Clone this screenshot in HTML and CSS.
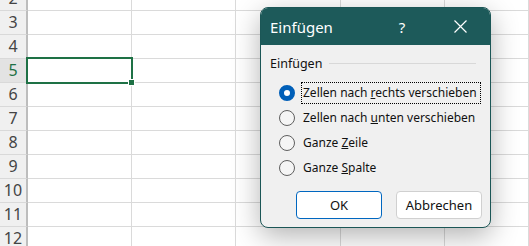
FILE: index.html
```html
<!DOCTYPE html>
<html lang="de">
  <head>
    <meta charset="UTF-8" />
    <title>Einfügen</title>
    <link rel="stylesheet" href="styles.css">
  </head>
  <body>
    <div class="sheet">
      <div class="row"><div class="head">2</div><div class="cell"></div><div class="cell"></div><div class="cell wide"></div><div class="cell"></div><div class="cell last"></div></div>
      <div class="row"><div class="head">3</div><div class="cell"></div><div class="cell"></div><div class="cell wide"></div><div class="cell"></div><div class="cell last"></div></div>
      <div class="row"><div class="head">4</div><div class="cell"></div><div class="cell"></div><div class="cell wide"></div><div class="cell"></div><div class="cell last"></div></div>
      <div class="row"><div class="head active">5</div><div class="cell selected"></div><div class="cell"></div><div class="cell wide"></div><div class="cell"></div><div class="cell last"></div></div>
      <div class="row"><div class="head">6</div><div class="cell"></div><div class="cell"></div><div class="cell wide"></div><div class="cell"></div><div class="cell last"></div></div>
      <div class="row"><div class="head">7</div><div class="cell"></div><div class="cell"></div><div class="cell wide"></div><div class="cell"></div><div class="cell last"></div></div>
      <div class="row"><div class="head">8</div><div class="cell"></div><div class="cell"></div><div class="cell wide"></div><div class="cell"></div><div class="cell last"></div></div>
      <div class="row"><div class="head">9</div><div class="cell"></div><div class="cell"></div><div class="cell wide"></div><div class="cell"></div><div class="cell last"></div></div>
      <div class="row"><div class="head">10</div><div class="cell"></div><div class="cell"></div><div class="cell wide"></div><div class="cell"></div><div class="cell last"></div></div>
      <div class="row"><div class="head">11</div><div class="cell"></div><div class="cell"></div><div class="cell wide"></div><div class="cell"></div><div class="cell last"></div></div>
      <div class="row"><div class="head">12</div><div class="cell"></div><div class="cell"></div><div class="cell wide"></div><div class="cell"></div><div class="cell last"></div></div>
    </div>

    <!-- Insert cells dialog -->
    <div class="dialog">
      <div class="titlebar">
        <span class="title">Einfügen</span>
        <span class="help">?</span>
        <span class="close">
          <svg width="13" height="13" viewBox="0 0 13 13">
            <path d="M0.5 0.5 L12.5 12.5 M12.5 0.5 L0.5 12.5" stroke="#fff" stroke-width="1.2" fill="none" />
          </svg>
        </span>
      </div>
      <div class="dialog-body">
        <div class="legend">
          <span>Einfügen</span>
          <span class="legend-line"></span>
        </div>
        <div class="options">
          <div class="option"><span class="radio checked"></span><span class="label focused">Zellen nach <u>r</u>echts verschieben</span></div>
          <div class="option"><span class="radio"></span><span class="label">Zellen nach <u>u</u>nten verschieben</span></div>
          <div class="option"><span class="radio"></span><span class="label">Ganze <u>Z</u>eile</span></div>
          <div class="option"><span class="radio"></span><span class="label">Ganze <u>S</u>palte</span></div>
        </div>
        <div class="buttons">
          <button class="btn primary">OK</button>
          <button class="btn">Abbrechen</button>
        </div>
      </div>
    </div>
  </body>
</html>
```

FILE: styles.css
```css
body {
  margin: 0;
  background: #ffffff;
  font-family: "Noto Sans", "Open Sans", sans-serif;
  overflow: hidden;
}
.sheet {
  margin-top: -13px;
}
.row {
  display: flex;
  height: 24px;
}
.head {
  flex: none;
  background: #f0f0f0;
  border-right: 2px solid #bdbdbd;
  border-bottom: 1px solid #d9d9d9;
  box-sizing: border-box;
  width: 28px;
  text-align: center;
  font-size: 16px;
  line-height: 23px;
  color: #444444;
}
.head.active {
  background: #e3e3e3;
  color: #1e7145;
}
.cell {
  position: relative;
  box-sizing: border-box;
  width: 104px;
  flex: none;
  border-right: 1px solid #dadada;
  border-bottom: 1px solid #dadada;
}
.cell.wide {
  width: 105px;
}
.cell.last {
  flex: 1;
}
.cell.selected::after {
  content: "";
  position: absolute;
  top: -2px;
  left: -2px;
  right: -2px;
  bottom: -2px;
  border: 2px solid #1e7145;
}
.cell.selected::before {
  content: "";
  position: absolute;
  right: -4px;
  bottom: -4px;
  width: 5px;
  height: 5px;
  background: #1e7145;
  border: 1px solid #fff;
  z-index: 1;
}
.dialog {
  position: absolute;
  left: 260px;
  top: 7px;
  width: 231px;
  box-sizing: border-box;
  background: #f0f0f0;
  border: 1px solid #1b5656;
  border-radius: 8px;
  overflow: hidden;
  box-shadow: 0 8px 28px rgba(0, 0, 0, 0.3);
  font-size: 12px;
  color: #111111;
}
.titlebar {
  display: flex;
  align-items: center;
  height: 37px;
  background: #1d5a5a;
  color: #ffffff;
  padding-left: 9px;
}
.title {
  font-size: 15px;
  flex: 1;
}
.help {
  font-size: 15px;
  width: 20px;
  text-align: center;
  margin-right: 42px;
}
.close {
  display: flex;
  margin-right: 23px;
}
.dialog-body {
  padding: 10px 8px 8px 9px;
}
.legend {
  display: flex;
  align-items: center;
  gap: 7px;
  height: 16px;
  padding-right: 6px;
  font-size: 12.5px;
}
.legend-line {
  flex: 1;
  height: 1px;
  background: #d8d8d8;
}
.options {
  margin-top: 9px;
  padding-left: 9px;
}
.option {
  display: flex;
  align-items: center;
  height: 25px;
  white-space: nowrap;
}
.radio {
  width: 16px;
  height: 16px;
  box-sizing: border-box;
  border: 1px solid #5f5f5f;
  border-radius: 50%;
  background: #f5f5f5;
  margin-right: 6px;
  flex: none;
}
.radio.checked {
  border: 5px solid #005fb8;
  background: #ffffff;
}
.label {
  padding: 2px 3px 2px 1px;
  border: 1px dotted transparent;
  line-height: 16px;
}
.label.focused {
  border-color: #000000;
}
.buttons {
  display: flex;
  justify-content: flex-end;
  gap: 14px;
  margin-top: 11px;
}
.btn {
  width: 86px;
  height: 28px;
  font-family: inherit;
  font-size: 13px;
  color: #111111;
  background: #ffffff;
  border: 1px solid #d0d0d0;
  border-radius: 4px;
}
.btn.primary {
  border-color: #0067c0;
}
```
